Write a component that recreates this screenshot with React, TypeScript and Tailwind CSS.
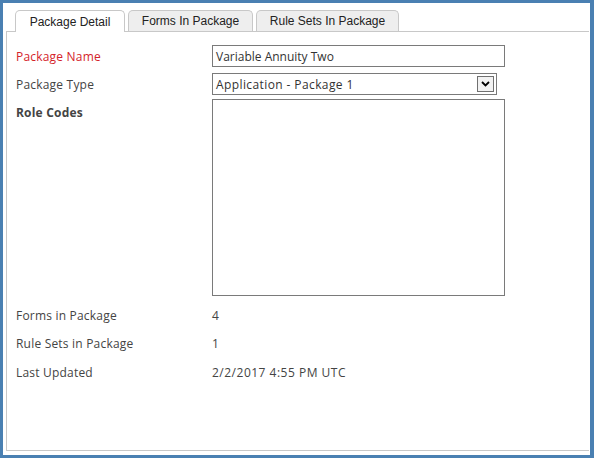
import React from "react";

const font = { fontFamily: '"Open Sans", "Noto Sans", sans-serif' };

export default function App() {
  return (
    <div className="w-[594px] h-[458px] bg-white border-[#4a80b2] border-t-[3px] border-l-[3px] border-r-[4px] border-b-[3px] box-border">
      <div className="h-full pl-[3px] pr-[1px] pt-[7px] pb-[4px] flex flex-col">
        {/* Tabs */}
        <div
          className="flex gap-[3px] pl-[9px] h-[22px] border-b border-[#c8c8c8] text-[12px] text-[#222]"
          style={{ fontFamily: '"Liberation Sans", Arial, sans-serif' }}
        >
          <div className="w-[110px] h-[22px] border border-b-0 border-[#c8c8c8] rounded-t-[5px] bg-white flex items-center justify-center">
            Package Detail
          </div>
          <div className="w-[125px] h-[21px] border border-b-0 border-[#c8c8c8] rounded-t-[5px] bg-[#eeeeee] flex items-center justify-center">
            Forms In Package
          </div>
          <div className="w-[143px] h-[21px] border border-b-0 border-[#c8c8c8] rounded-t-[5px] bg-[#eeeeee] flex items-center justify-center">
            Rule Sets In Package
          </div>
        </div>
        {/* Panel */}
        <div
          className="flex-1 border-l border-b border-[#c8c8c8] pl-[9px] pt-[13px] text-[12px] text-[#444] tracking-[0.2px]"
          style={font}
        >
          <div className="flex items-center h-[22px]">
            <div className="w-[196px] pt-[1px] text-[#d4232a]">Package Name</div>
            <div className="w-[293px] h-[22px] border border-[#7a7a7a] flex items-center pl-[3px] pt-[1px] text-[#333] tracking-[0px]">
              Variable Annuity Two
            </div>
          </div>
          <div className="flex items-center h-[22px] mt-[6px]">
            <div className="w-[196px] pt-[2px]">Package Type</div>
            <div className="w-[285px] h-[22px] border border-[#7a7a7a] flex items-center pl-[3px] pr-[2px] text-[#333]">
              <span className="flex-1 pt-[1px] tracking-[0.4px]">Application - Package 1</span>
              <div className="w-[17px] h-[16px] border border-[#707070] bg-[#f2f2f2] flex items-center justify-center">
                <svg width="9" height="6" viewBox="0 0 9 6">
                  <path d="M1 1 L4.5 4.5 L8 1" fill="none" stroke="#000" strokeWidth="1.8" />
                </svg>
              </div>
            </div>
          </div>
          <div className="flex mt-[4px]">
            <div className="w-[196px] pt-[5px] font-bold">Role Codes</div>
            <div className="w-[293px] h-[197px] border border-[#7a7a7a]" />
          </div>
          <div className="mt-[5px]">
            <div className="flex items-center h-[28px] pt-[1px]">
              <div className="w-[196px]">Forms in Package</div>
              <div>4</div>
            </div>
            <div className="flex items-center h-[29px]">
              <div className="w-[196px]">Rule Sets in Package</div>
              <div>1</div>
            </div>
            <div className="flex items-center h-[29px]">
              <div className="w-[196px]">Last Updated</div>
              <div className="tracking-[0.5px]">2/2/2017 4:55 PM UTC</div>
            </div>
          </div>
        </div>
      </div>
    </div>
  );
}
